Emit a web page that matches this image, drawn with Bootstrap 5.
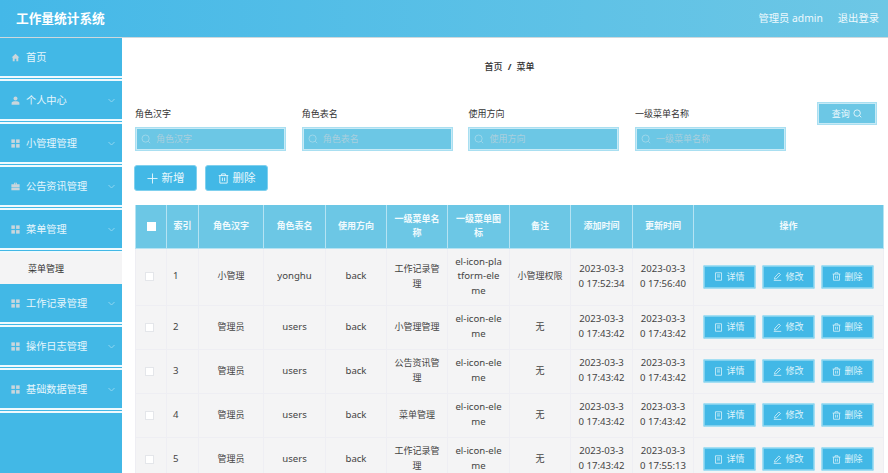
<!DOCTYPE html>
<html lang="zh">
<head>
<meta charset="utf-8">
<title>工作量统计系统</title>
<link href="https://cdn.jsdelivr.net/npm/bootstrap@5.3.0/dist/css/bootstrap.min.css" rel="stylesheet">
<style>
html,body{height:473px;overflow:hidden}
body{font-family:"Noto Sans","Noto Sans CJK SC",sans-serif;font-size:11px;color:#333;background:#fff}
.topbar{height:38px;background:linear-gradient(90deg,#44b8e8,#6dc7e5);border-bottom:1px solid #cfd8dc;color:#fff;padding:0 9px 0 16px}
.topbar .brand-t{font-size:12.7px;font-weight:700}
.topbar .who{font-size:10.3px;color:#eef9fd;gap:15px}
.shell{height:435px}
.sidemenu{width:122px;background:#42b8e6;flex:none;color:#e6f6fc}
.mi{height:43px;padding:1px 7px 0 11px;border-bottom:5px double #f0fafe;font-size:10.2px;gap:6px}
.mi svg.ic{width:9px;height:9px;fill:#c9d6dc;flex:none}
.mi svg.chev{width:7px;height:5px;margin-left:auto;stroke:#8fd6f0;fill:none;flex:none}
.subi{height:31px;background:#f4f4f5;color:#333;font-size:9px;padding-left:28px}
.mainarea{padding:0 4px 0 13px;min-width:0}
.crumb{height:57px;font-size:9px;color:#333;font-weight:500}
.crumb b{font-weight:700;margin:0 5px}
.filters{height:70px}
.fgroup{width:151px;margin-right:15.7px;padding-top:12px}
.fgroup label{display:block;font-size:9px;line-height:13px;color:#333;margin-bottom:7px}
.sbox{height:24px;background:#6cc7e5;border:2px solid #c7eaf6;outline:1px solid #a9dff1;outline-offset:-1px;color:#a9cfdd;font-size:9px;padding-left:4px;gap:5px}
.sbox svg{width:10px;height:10px;stroke:#a5d9ea;fill:none;flex:none}
.qbtn{width:60px;height:23px;margin:7px 0 0 15px;background:#6cc7e5;border:2px solid #c7eaf6;outline:1px solid #a9dff1;outline-offset:-1px;color:#eef9fd;font-size:9px;gap:3px;padding:0;border-radius:0}
.qbtn svg{width:9px;height:9px;stroke:#fff;fill:none}
.acts{height:40px;gap:8px;margin-left:-1px}
.abtn{width:63px;height:26px;background:#42b8e6;border:1px solid #7fd0ee;border-radius:3px;color:#e8f7fc;font-size:11.5px;gap:4px;padding:0}
.abtn svg{width:11px;height:11px;stroke:#e8f7fc;fill:none;flex:none}
.dtable{table-layout:fixed;width:749px;margin:0;border-collapse:collapse;font-size:9.6px;--bs-table-bg:transparent}
.dtable th{background:#6cc7e5;color:#f0fafd;font-weight:700;font-size:9px;height:43px;padding:3px 6px;line-height:14.7px;border:1px solid #b5e3f3;border-top:0;text-align:center;vertical-align:middle}
.dtable td{background:#f4f4f5;color:#444;padding:6px 6px;line-height:14.7px;border:1px solid #eeeef3;border-top:0;text-align:center;vertical-align:middle;word-break:break-all}
.dtable td.sm{font-size:9px}
.dtable td.idx{text-align:left;padding-left:6px}
.dtable tr.tall td{height:57px}
.dtable tr.norm td{height:44px}
.ck{display:inline-block;width:9px;height:9px;background:#fff;border:1px solid #e4e6ea;vertical-align:middle}
td .ck{margin-right:3px}
th .ck{width:9px;height:9px;border:0}
.opset{gap:6px;justify-content:center}
.obtn{width:53px;height:24px;background:#42b8e6;border:2px solid #7fd0ee;outline:1px solid #a5dff3;outline-offset:-1px;border-radius:2px;color:#dff4fb;font-size:9px;gap:3px;padding:0}
.obtn svg{width:9px;height:9px;stroke:#dff4fb;fill:none;flex:none}
</style>
</head>
<body>
<svg width="0" height="0" class="d-block">
<symbol id="i-home" viewBox="0 0 12 12"><path d="M6 1 .8 6H2.3v5h2.6V7.6h2.2V11h2.6V6h1.5z"/></symbol>
<symbol id="i-user" viewBox="0 0 12 12"><circle cx="6" cy="3.4" r="2.6"/><path d="M.8 11.5V9.4C.8 7.8 2.5 7 6 7s5.200.8 5.200 2.400v2.100z"/></symbol>
<symbol id="i-grid" viewBox="0 0 12 12"><rect x=".5" y=".5" width="4.700" height="4.700"/><rect x="6.800" y=".5" width="4.700" height="4.700"/><rect x=".5" y="6.800" width="4.700" height="4.700"/><rect x="6.800" y="6.800" width="4.700" height="4.700"/></symbol>
<symbol id="i-case" viewBox="0 0 12 12"><path d="M4 1h4v2h3.500v3.500H.5V3H4zm1 1v1h2V2zM.5 7.300h11v3.700H.5z"/></symbol>
<symbol id="i-chev" viewBox="0 0 7 5"><path d="M.5 1 3.500 4 6.500 1"/></symbol>
<symbol id="i-search" viewBox="0 0 12 12"><circle cx="5.500" cy="5.500" r="4.300" stroke-width="1"/><path d="m8.700 8.700 2.300 2.300" stroke-width="1"/></symbol>
<symbol id="i-plus" viewBox="0 0 12 12"><path d="M6 .5v11M.5 6h11" stroke-width="1"/></symbol>
<symbol id="i-trash" viewBox="0 0 12 12"><path d="M.8 2.800h10.400M4 2.800V1h4v1.800M2 2.800v8.200h8V2.800M4.800 5v3.800M7.200 5v3.800" stroke-width="1"/></symbol>
<symbol id="i-doc" viewBox="0 0 12 12"><path d="M2 1h8v10H2zM4 4h4M4 6.500h4" stroke-width="1"/></symbol>
<symbol id="i-edit" viewBox="0 0 12 12"><path d="M7.800 1.300 10 3.300 4.500 9 2 9.500 2.500 7zM1 11.200h10" stroke-width="1"/></symbol>
</svg>

<header class="topbar d-flex align-items-center justify-content-between">
  <span class="brand-t">工作量统计系统</span>
  <span class="who d-flex"><span>管理员 admin</span><span>退出登录</span></span>
</header>

<div class="shell d-flex">
  <nav class="sidemenu">
    <div class="mi d-flex align-items-center"><svg class="ic"><use href="#i-home"/></svg>首页</div>
    <div class="mi d-flex align-items-center"><svg class="ic"><use href="#i-user"/></svg>个人中心<svg class="chev"><use href="#i-chev"/></svg></div>
    <div class="mi d-flex align-items-center"><svg class="ic"><use href="#i-grid"/></svg>小管理管理<svg class="chev"><use href="#i-chev"/></svg></div>
    <div class="mi d-flex align-items-center"><svg class="ic"><use href="#i-case"/></svg>公告资讯管理<svg class="chev"><use href="#i-chev"/></svg></div>
    <div class="mi d-flex align-items-center"><svg class="ic"><use href="#i-grid"/></svg>菜单管理<svg class="chev"><use href="#i-chev"/></svg></div>
    <div class="subi d-flex align-items-center">菜单管理</div>
    <div class="mi d-flex align-items-center"><svg class="ic"><use href="#i-grid"/></svg>工作记录管理<svg class="chev"><use href="#i-chev"/></svg></div>
    <div class="mi d-flex align-items-center"><svg class="ic"><use href="#i-grid"/></svg>操作日志管理<svg class="chev"><use href="#i-chev"/></svg></div>
    <div class="mi d-flex align-items-center"><svg class="ic"><use href="#i-grid"/></svg>基础数据管理<svg class="chev"><use href="#i-chev"/></svg></div>
  </nav>

  <main class="mainarea flex-grow-1">
    <div class="crumb d-flex align-items-center justify-content-center"><span>首页<b>/</b>菜单</span></div>

    <div class="filters d-flex">
      <div class="fgroup"><label>角色汉字</label><div class="sbox d-flex align-items-center"><svg><use href="#i-search"/></svg>角色汉字</div></div>
      <div class="fgroup"><label>角色表名</label><div class="sbox d-flex align-items-center"><svg><use href="#i-search"/></svg>角色表名</div></div>
      <div class="fgroup"><label>使用方向</label><div class="sbox d-flex align-items-center"><svg><use href="#i-search"/></svg>使用方向</div></div>
      <div class="fgroup"><label>一级菜单名称</label><div class="sbox d-flex align-items-center"><svg><use href="#i-search"/></svg>一级菜单名称</div></div>
      <button class="btn qbtn d-flex align-items-center justify-content-center" type="button">查询<svg><use href="#i-search"/></svg></button>
    </div>

    <div class="acts d-flex">
      <button class="btn abtn d-flex align-items-center justify-content-center" type="button"><svg><use href="#i-plus"/></svg>新增</button>
      <button class="btn abtn d-flex align-items-center justify-content-center" type="button"><svg><use href="#i-trash"/></svg>删除</button>
    </div>

    <table class="table dtable">
      <colgroup><col style="width:31px"><col style="width:32px"><col style="width:65px"><col style="width:62px"><col style="width:61px"><col style="width:61px"><col style="width:62px"><col style="width:61px"><col style="width:62px"><col style="width:61px"><col></colgroup>
      <thead><tr><th><span class="ck"></span></th><th>索引</th><th>角色汉字</th><th>角色表名</th><th>使用方向</th><th>一级菜单名称</th><th>一级菜单图标</th><th>备注</th><th>添加时间</th><th>更新时间</th><th>操作</th></tr></thead>
      <tbody>
        <tr class="tall"><td><span class="ck"></span></td><td class="idx">1</td><td class="sm">小管理</td><td>yonghu</td><td>back</td><td class="sm">工作记录管理</td><td>el-icon-platform-eleme</td><td class="sm">小管理权限</td><td>2023-03-30 17:52:34</td><td>2023-03-30 17:56:40</td>
          <td><div class="opset d-flex"><button class="btn obtn d-flex align-items-center justify-content-center" type="button"><svg><use href="#i-doc"/></svg>详情</button><button class="btn obtn d-flex align-items-center justify-content-center" type="button"><svg><use href="#i-edit"/></svg>修改</button><button class="btn obtn d-flex align-items-center justify-content-center" type="button"><svg><use href="#i-trash"/></svg>删除</button></div></td></tr>
        <tr class="norm"><td><span class="ck"></span></td><td class="idx">2</td><td class="sm">管理员</td><td>users</td><td>back</td><td class="sm">小管理管理</td><td>el-icon-eleme</td><td class="sm">无</td><td>2023-03-30 17:43:42</td><td>2023-03-30 17:43:42</td>
          <td><div class="opset d-flex"><button class="btn obtn d-flex align-items-center justify-content-center" type="button"><svg><use href="#i-doc"/></svg>详情</button><button class="btn obtn d-flex align-items-center justify-content-center" type="button"><svg><use href="#i-edit"/></svg>修改</button><button class="btn obtn d-flex align-items-center justify-content-center" type="button"><svg><use href="#i-trash"/></svg>删除</button></div></td></tr>
        <tr class="norm"><td><span class="ck"></span></td><td class="idx">3</td><td class="sm">管理员</td><td>users</td><td>back</td><td class="sm">公告资讯管理</td><td>el-icon-eleme</td><td class="sm">无</td><td>2023-03-30 17:43:42</td><td>2023-03-30 17:43:42</td>
          <td><div class="opset d-flex"><button class="btn obtn d-flex align-items-center justify-content-center" type="button"><svg><use href="#i-doc"/></svg>详情</button><button class="btn obtn d-flex align-items-center justify-content-center" type="button"><svg><use href="#i-edit"/></svg>修改</button><button class="btn obtn d-flex align-items-center justify-content-center" type="button"><svg><use href="#i-trash"/></svg>删除</button></div></td></tr>
        <tr class="norm"><td><span class="ck"></span></td><td class="idx">4</td><td class="sm">管理员</td><td>users</td><td>back</td><td class="sm">菜单管理</td><td>el-icon-eleme</td><td class="sm">无</td><td>2023-03-30 17:43:42</td><td>2023-03-30 17:43:42</td>
          <td><div class="opset d-flex"><button class="btn obtn d-flex align-items-center justify-content-center" type="button"><svg><use href="#i-doc"/></svg>详情</button><button class="btn obtn d-flex align-items-center justify-content-center" type="button"><svg><use href="#i-edit"/></svg>修改</button><button class="btn obtn d-flex align-items-center justify-content-center" type="button"><svg><use href="#i-trash"/></svg>删除</button></div></td></tr>
        <tr class="norm"><td><span class="ck"></span></td><td class="idx">5</td><td class="sm">管理员</td><td>users</td><td>back</td><td class="sm">工作记录管理</td><td>el-icon-eleme</td><td class="sm">无</td><td>2023-03-30 17:43:42</td><td>2023-03-30 17:55:13</td>
          <td><div class="opset d-flex"><button class="btn obtn d-flex align-items-center justify-content-center" type="button"><svg><use href="#i-doc"/></svg>详情</button><button class="btn obtn d-flex align-items-center justify-content-center" type="button"><svg><use href="#i-edit"/></svg>修改</button><button class="btn obtn d-flex align-items-center justify-content-center" type="button"><svg><use href="#i-trash"/></svg>删除</button></div></td></tr>
      </tbody>
    </table>
  </main>
</div>
<script src="https://cdn.jsdelivr.net/npm/bootstrap@5.3.0/dist/js/bootstrap.bundle.min.js"></script>
</body>
</html>
